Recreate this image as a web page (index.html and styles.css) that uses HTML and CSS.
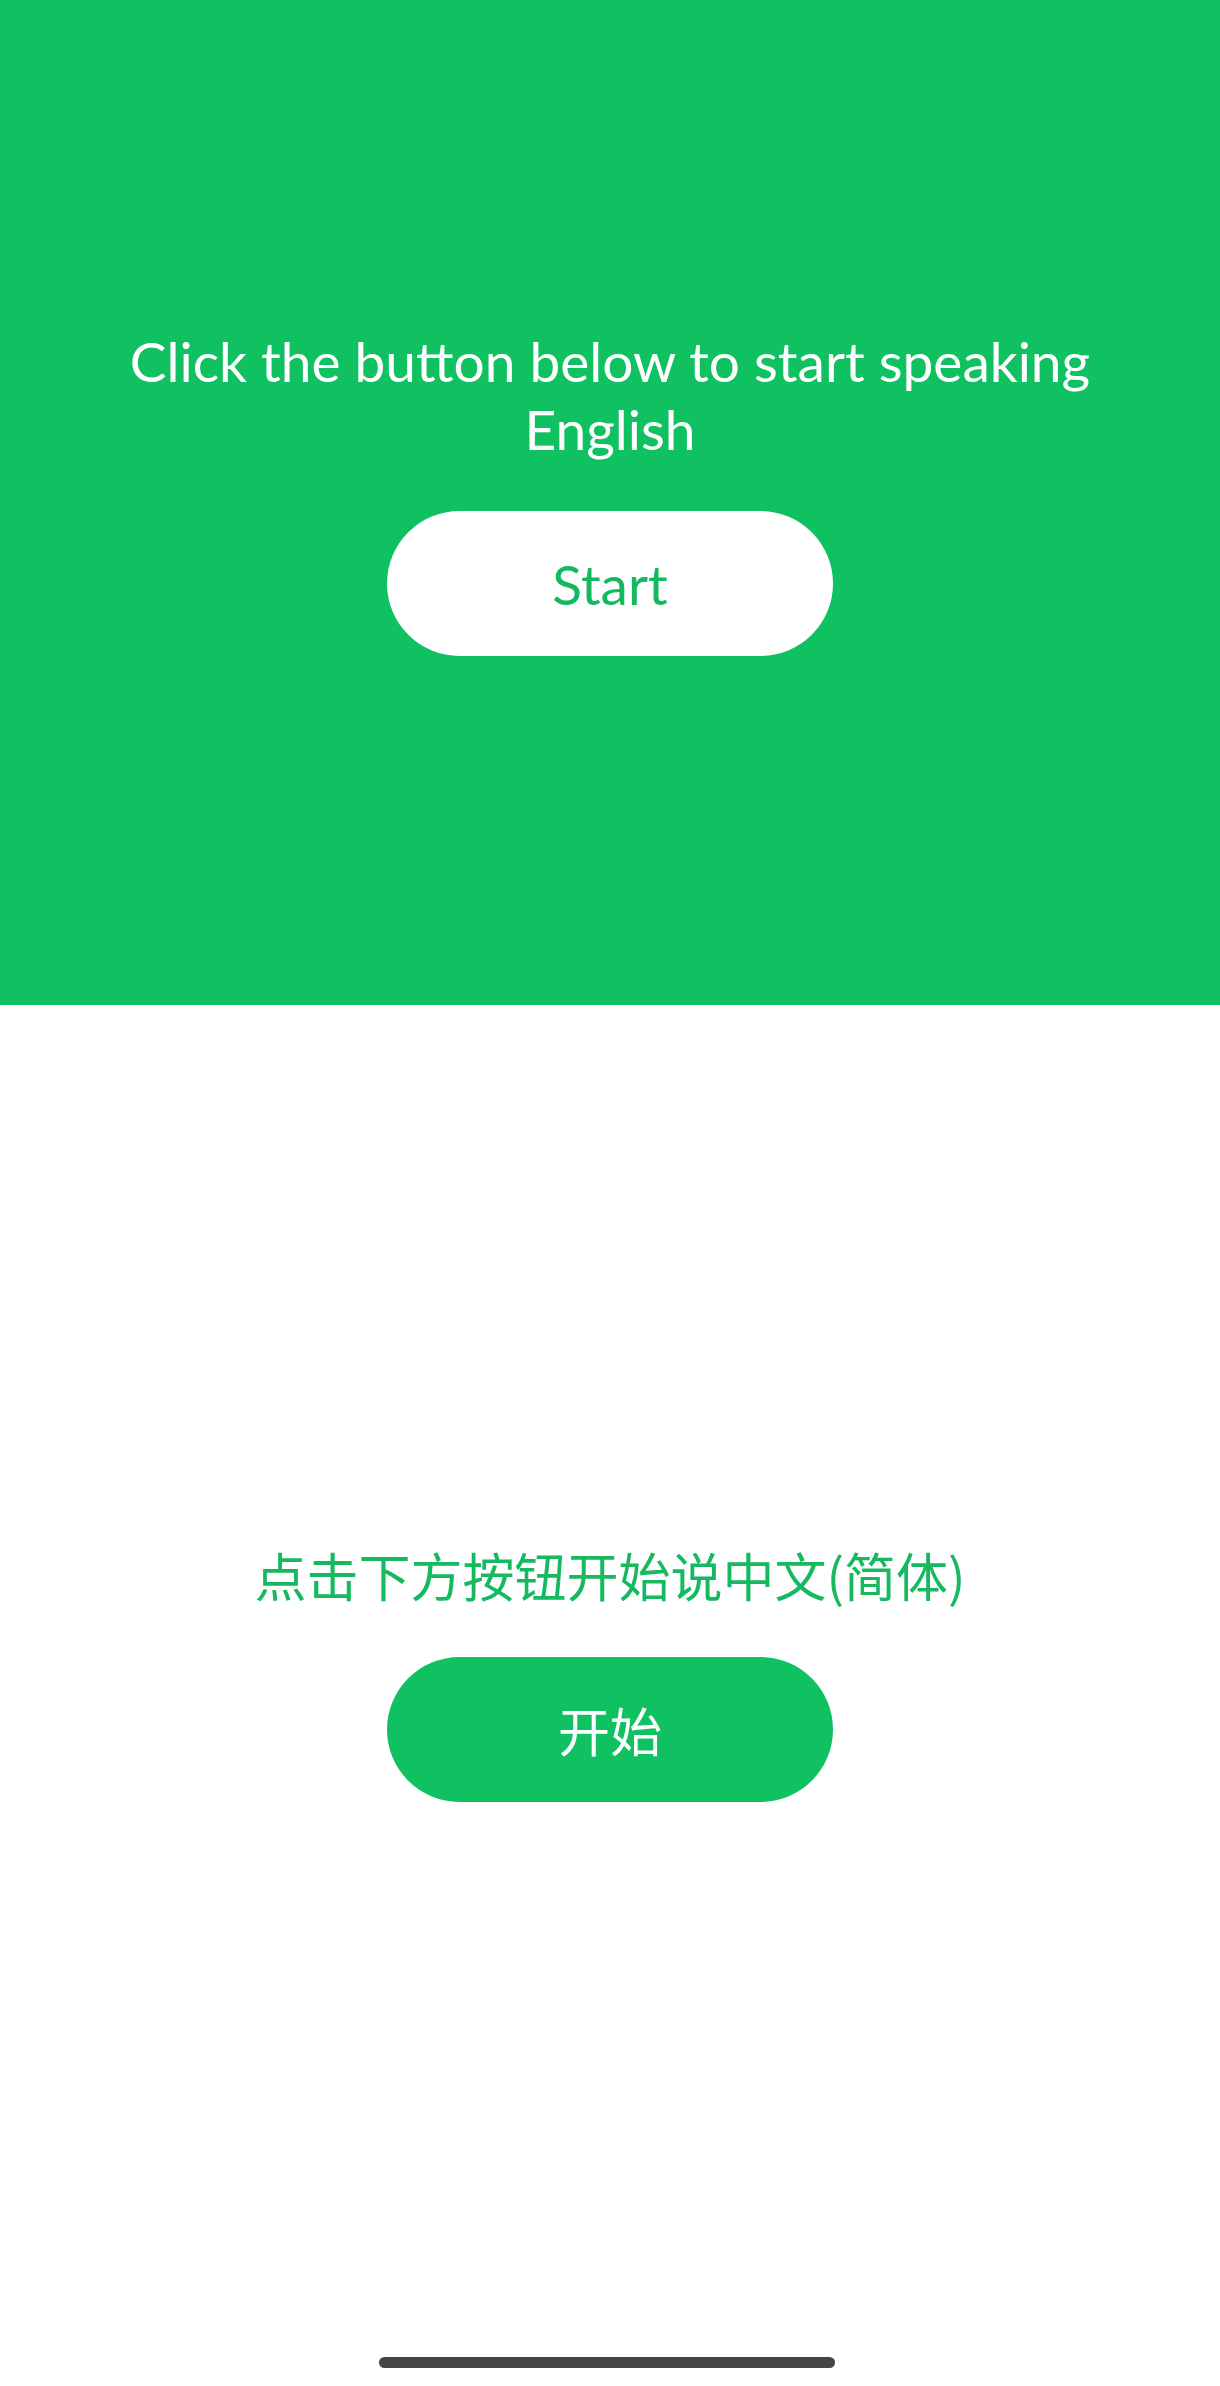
FILE: index.html
```html
<!DOCTYPE html>
<html lang="en">
<head>
<meta charset="utf-8">
<title>Speak</title>
<link rel="stylesheet" href="styles.css">
</head>
<body>
<div class="page">
  <section class="panel panel-en">
    <p class="prompt">Click the button below to start speaking English</p>
    <button class="pill pill-white">Start</button>
  </section>
  <section class="panel panel-zh">
    <p class="prompt prompt-zh" lang="zh-CN">点击下方按钮开始说中文(简体)</p>
    <button class="pill pill-green" lang="zh-CN">开始</button>
  </section>
  <div class="home-bar"></div>
</div>
</body>
</html>
```

FILE: styles.css
```css
html, body {
  margin: 0;
  padding: 0;
  background: #ffffff;
}
body {
  font-family: "Lato", "Noto Sans CJK SC", sans-serif;
}
.page {
  width: 1220px;
  height: 2386px;
  display: flex;
  flex-direction: column;
  overflow: hidden;
}
.panel {
  display: flex;
  flex-direction: column;
  align-items: center;
  box-sizing: border-box;
}
.panel-en {
  height: 1005px;
  background: #0fc160;
  padding-top: 327px;
}
.panel-zh {
  flex: 1;
  background: #ffffff;
  padding-top: 536px;
}
.prompt {
  margin: 0;
  width: 1000px;
  text-align: center;
  font-size: 55px;
  line-height: 68px;
  color: #ffffff;
  font-weight: 400;
}
.prompt-zh {
  font-family: "Noto Sans CJK SC", sans-serif;
  color: #16b95f;
  font-size: 52px;
  font-weight: 400;
}
.pill {
  margin-top: 48px;
  width: 446px;
  height: 145px;
  border: none;
  border-radius: 999px;
  font-family: "Lato", "Noto Sans CJK SC", sans-serif;
  font-size: 55px;
  font-weight: 400;
  padding: 0;
  display: flex;
  align-items: center;
  justify-content: center;
}
.pill-white {
  background: #ffffff;
  color: #13b95e;
}
.pill-green {
  background: #0fc160;
  color: #ffffff;
  font-family: "Noto Sans CJK SC", sans-serif;
  font-size: 52px;
  font-weight: 400;
}
.home-bar {
  flex: none;
  align-self: center;
  width: 456px;
  height: 11px;
  border-radius: 6px;
  background: #454545;
  margin: 0 6px 18px 0;
}
```
